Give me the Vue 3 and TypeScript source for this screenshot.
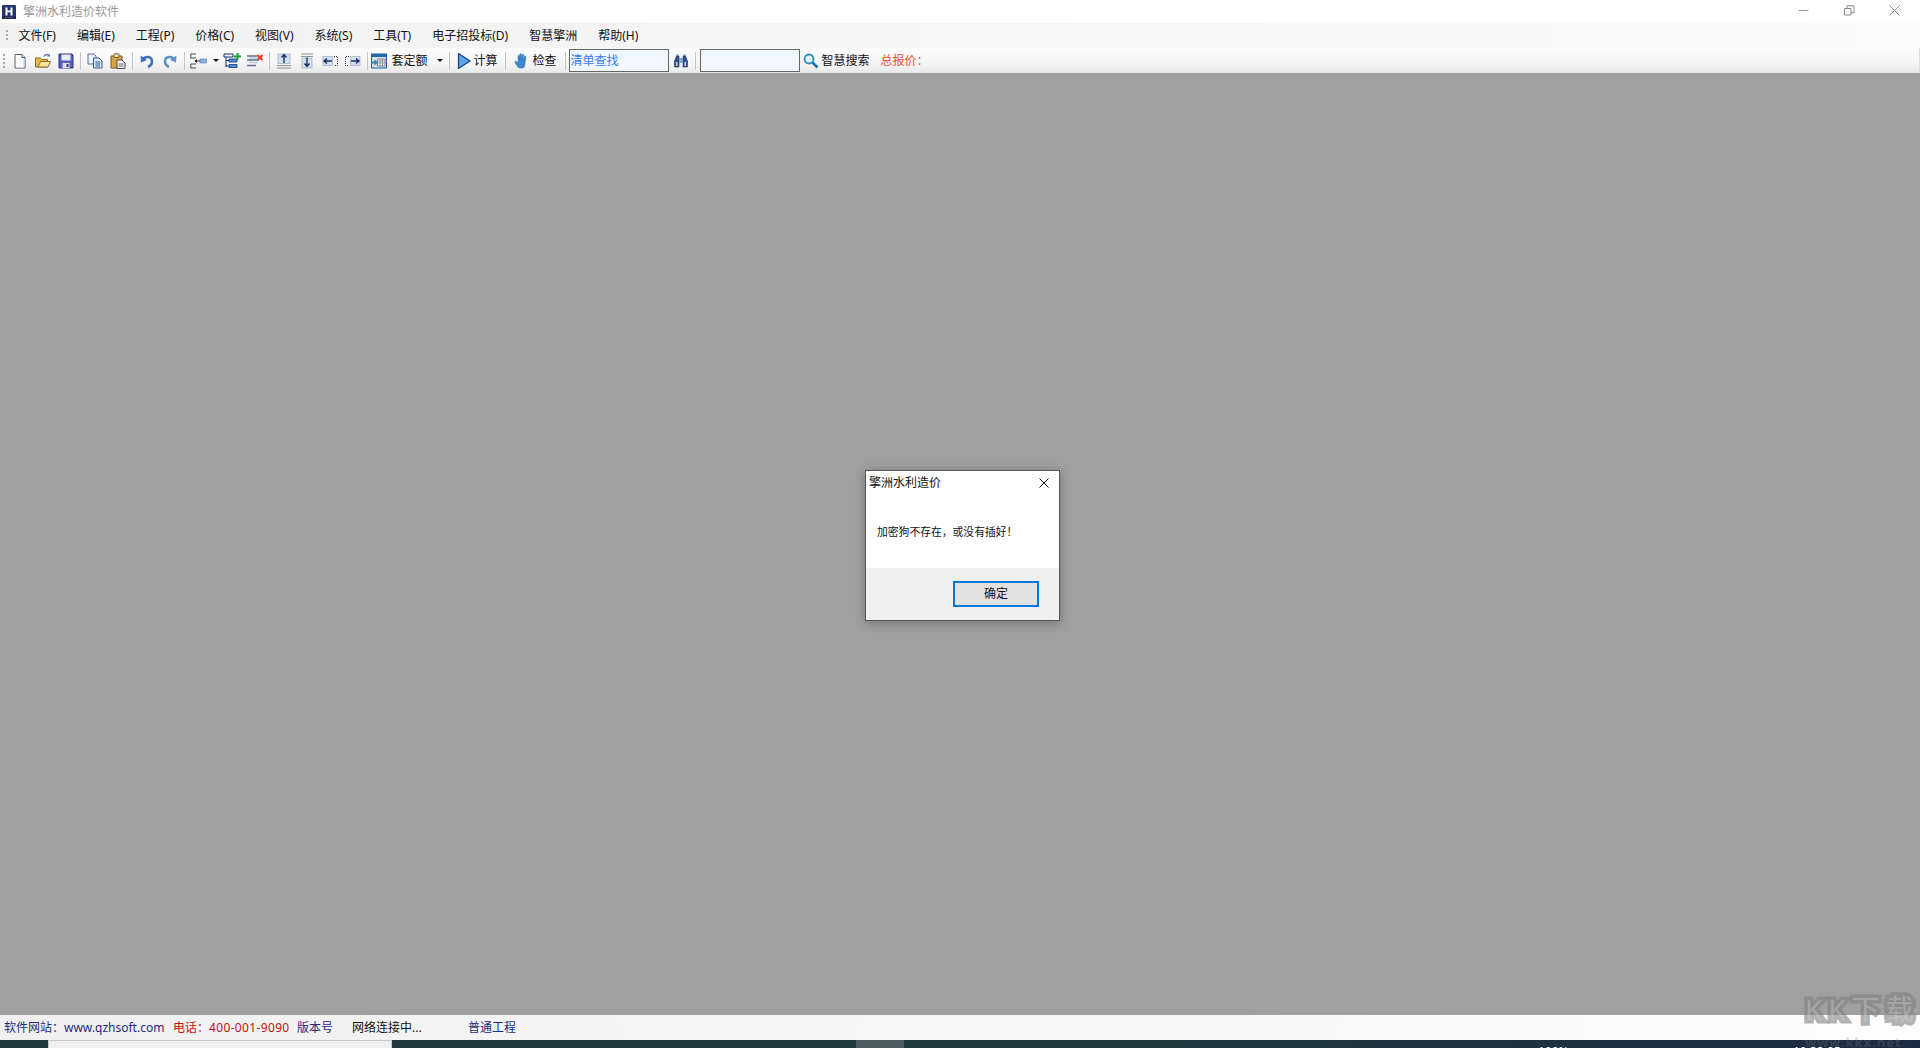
<script setup lang="ts">
const menus = ['文件(F)', '编辑(E)', '工程(P)', '价格(C)', '视图(V)', '系统(S)', '工具(T)', '电子招投标(D)', '智慧擎洲', '帮助(H)']
</script>

<template>
  <div class="app">
    <header class="titlebar">
      <svg class="logo" viewBox="0 0 14 14" width="14" height="14">
        <rect width="14" height="14" rx="1" fill="#27356f" />
        <rect y="11" width="14" height="3" fill="#1c2550" />
        <path d="M3.5 2.5h2v3h3v-3h2v8h-2V7.3h-3v3.2h-2z" fill="#fff" />
        <path d="M3 12.4h8" stroke="#aab" stroke-width=".7" stroke-dasharray="1 .6" />
      </svg>
      <span class="title">擎洲水利造价软件</span>
      <div class="winbtns">
        <svg width="11" height="11" viewBox="0 0 11 11"><path d="M0.5 5.5h10" stroke="#999" /></svg>
        <svg width="11" height="11" viewBox="0 0 11 11" fill="none" stroke="#888"><path d="M.5 3.5h6.5v6.5H.5z" /><path d="M3 3.5V.8h7v7H7" /></svg>
        <svg width="11" height="11" viewBox="0 0 11 11"><path d="M.5.5l10 10M10.5.5l-10 10" stroke="#888" /></svg>
      </div>
    </header>

    <nav class="menubar">
      <span class="grip"></span>
      <span v-for="m in menus" :key="m" class="menu">{{ m }}</span>
    </nav>

    <div class="toolbar">
      <span class="grip"></span>

      <button class="tb">
        <svg viewBox="0 0 16 16"><path d="M3 1.5h7l3 3v10.5H3z" fill="#fff" stroke="#50607c" /><path d="M10 1.5v3h3" fill="#d8e2f2" stroke="#50607c" /><path d="M12 6v8.500H4.500" fill="none" stroke="#c3d0e6" /></svg>
      </button>
      <button class="tb">
        <svg viewBox="0 0 16 16"><path d="M.5 5h5l1 1.500h6V14H.5z" fill="#e9b84c" stroke="#8a6a26" /><path d="M3 14l2.500-5.500H15.500L13 14z" fill="#fbe39a" stroke="#8a6a26" /><path d="M9 3.500c1-2 3-2.500 5-1" fill="none" stroke="#4c6fa8" stroke-width="1.200" /><path d="M14.800 .8v2.700h-2.700z" fill="#4c6fa8" /></svg>
      </button>
      <button class="tb">
        <svg viewBox="0 0 16 16"><path d="M1 1h13l1 1v13H1z" fill="#5a5cc0" stroke="#2f3380" /><rect x="3.500" y="1.500" width="9" height="6" fill="#e8ecf6" /><rect x="4.500" y="10" width="7" height="5" fill="#dfe1ea" /><rect x="8.500" y="11" width="2" height="3" fill="#33395e" /></svg>
      </button>
      <span class="sep"></span>

      <button class="tb">
        <svg viewBox="0 0 16 16"><path d="M1 1h6l2 2v8H1z" fill="#eef3fb" stroke="#5b7099" /><path d="M6.500 5H12l3 3v7H6.500z" fill="#d9e6f8" stroke="#33598f" /><path d="M8.500 9h4.500M8.500 11h4.500M8.500 13h4.500" stroke="#33598f" /></svg>
      </button>
      <button class="tb">
        <svg viewBox="0 0 16 16"><path d="M1 3h11v12H1z" fill="#d9a441" stroke="#7a5a1e" /><rect x="4" y=".8" width="5" height="3.700" rx=".8" fill="#f3e6be" stroke="#7a5a1e" /><path d="M7 7h5l3 3v5.500H7z" fill="#f4f4f4" stroke="#4a4a4a" /><path d="M8.500 11h5M8.500 13h5" stroke="#666" /></svg>
      </button>
      <span class="sep"></span>

      <button class="tb">
        <svg viewBox="0 0 16 16"><path d="M3.500 7c2-4 9-4.500 9.500 1 .3 3-2 5-4 6" fill="none" stroke="#3f73b8" stroke-width="2.600" /><path d="M1.500 2.500l.5 7 6-2.500z" fill="#3f73b8" /></svg>
      </button>
      <button class="tb">
        <svg viewBox="0 0 16 16"><path d="M12.500 7c-2-4-9-4.500-9.500 1-.3 3 2 5 4 6" fill="none" stroke="#5f8fcb" stroke-width="2.600" /><path d="M14.500 2.500l-.5 7-6-2.500z" fill="#5f8fcb" /></svg>
      </button>
      <span class="sep"></span>

      <button class="tb">
        <svg viewBox="0 0 18 16" class="wide"><path d="M6 1H.8v4H6M6 11H.8v4H6" fill="none" stroke="#333" stroke-width=".9" /><path d="M5 8h5" stroke="#333" /><path d="M4.500 8l2.500-2v4z" fill="#222" /><rect x="10" y="6" width="6.500" height="4" fill="#8eb4e3" stroke="#4c78b0" stroke-width=".6" /></svg>
      </button>
      <span class="arrow narrow"></span>
      <button class="tb">
        <svg viewBox="0 0 18 16" class="wide"><path d="M1 1h9v3H1zM3 4v10M3 7.500h3M3 13h3" fill="none" stroke="#12306e" /><path d="M6 6h8v3H6zM6 11.500h8v3H6z" fill="#4f8fdc" stroke="#12306e" stroke-width=".8" /><path d="M13.500 0h2v2.500H18v2h-2.500V7h-2V4.500H11v-2h2.500z" fill="#18a030" /></svg>
      </button>
      <button class="tb">
        <svg viewBox="0 0 18 16" class="wide"><path d="M1 3h10M1 7h12M1 12.500h9" stroke="#5b6f90" stroke-width="1.400" /><path d="M3 5h9M3 9.500h9" stroke="#b8cbe8" stroke-width="1.400" /><path d="M11.500 2l5 5M16.500 2l-5 5" stroke="#e83c24" stroke-width="2.200" /></svg>
      </button>
      <span class="sep"></span>

      <button class="tb">
        <svg viewBox="0 0 16 16"><rect x="2" y="1" width="12" height="9.500" fill="#d5e0ee" stroke="#8ea2bd" stroke-width=".6" /><path d="M8 1.500V10M5.500 4.500L8 1.500l2.500 3" fill="none" stroke="#14306a" stroke-width="1.400" /><path d="M1.500 12.500h13M1.500 15h13" stroke="#333" stroke-dasharray="1 1" /></svg>
      </button>
      <button class="tb">
        <svg viewBox="0 0 16 16"><path d="M2.500 1h11M2.500 3.500h11" stroke="#333" stroke-dasharray="1 1" /><rect x="3" y="5" width="10" height="10" fill="#d5e0ee" stroke="#8ea2bd" stroke-width=".6" /><path d="M8 4.500V13M5.500 10.500L8 13.500l2.500-3" fill="none" stroke="#14306a" stroke-width="1.400" /></svg>
      </button>
      <button class="tb">
        <svg viewBox="0 0 16 16"><rect x="1" y="3.500" width="9.500" height="9" fill="#d5e0ee" stroke="#8ea2bd" stroke-width=".6" /><path d="M2 8h8M5 5.500L2 8l3 2.500" fill="none" stroke="#14306a" stroke-width="1.400" /><path d="M12 3.500h3.500v9H12" fill="none" stroke="#333" stroke-dasharray="1 1" /></svg>
      </button>
      <button class="tb">
        <svg viewBox="0 0 16 16"><rect x="5.500" y="3.500" width="9.500" height="9" fill="#d5e0ee" stroke="#8ea2bd" stroke-width=".6" /><path d="M6 8h8M11 5.500L14 8l-3 2.500" fill="none" stroke="#14306a" stroke-width="1.400" /><path d="M4 3.500H.5v9H4" fill="none" stroke="#333" stroke-dasharray="1 1" /></svg>
      </button>
      <span class="sep"></span>

      <button class="tb labeled quota">
        <svg viewBox="0 0 16 16"><rect x=".5" y="1" width="15" height="14" fill="#cfe0f2" stroke="#1d5a9c" /><rect x=".5" y="1" width="15" height="3" fill="#2468b0" /><path d="M6.500 6h7.500v7H6.500z" fill="#fff" stroke="#444" stroke-width=".6" /><path d="M7 8h7M7 10h7M9 6v7M11.500 6v7" stroke="#444" stroke-width=".5" /><path d="M0 8.500h3.500V6.500L7 9.500l-3.500 3v-2H0z" fill="#2b80c8" /></svg>
        <span>套定额</span>
      </button>
      <span class="arrow quota-arrow"></span>
      <span class="sep"></span>

      <button class="tb labeled calc">
        <svg viewBox="0 0 16 16"><path d="M2.500 .5L14 8 2.500 15.500z" fill="#5ea3e6" stroke="#123f8f" stroke-width="1.200" /></svg>
        <span>计算</span>
      </button>
      <span class="sep"></span>

      <button class="tb labeled check">
        <svg viewBox="0 0 16 16"><path d="M5 15c-1.500-1.500-4-4.500-4.200-6 0-.8 1-1 1.600-.3L4 10V3c0-1 1.400-1 1.500 0l.3 4V1.500c0-1 1.500-1 1.600 0L7.700 7l.5-5c.1-1 1.500-.9 1.500 .1L9.500 7.500l1-4c.3-1 1.500-.7 1.400 .3L11 11c-.2 2-1 3.500-2 4z" fill="#3c87cf" stroke="#2a6cae" stroke-width=".5" /></svg>
        <span>检查</span>
      </button>
      <span class="sep"></span>

      <div class="field find">清单查找</div>
      <button class="tb binoc">
        <svg viewBox="0 0 16 16"><path d="M1.500 14V8l2-5h2.500v11zM14.500 14V8l-2-5H10v11z" fill="#2e4f8a" stroke="#1c2f5c" stroke-width=".6" /><path d="M6 5h4v5H6z" fill="#8aa2c8" /><path d="M3 9h1.500v4H3zM11.500 9H13v4h-1.500z" fill="#c5d5ee" /><path d="M3.500 1.500h2V3h-2zM10.500 1.500h2V3h-2z" fill="#5b7db0" /></svg>
      </button>
      <span class="sep"></span>

      <div class="field search"></div>
      <button class="tb labeled smart">
        <svg viewBox="0 0 16 16"><circle cx="6" cy="6" r="4.500" fill="#e6f3fa" stroke="#2a8ac4" stroke-width="1.800" /><path d="M9.500 9.500l5 5" stroke="#1f76ad" stroke-width="2.600" /></svg>
        <span>智慧搜索</span>
      </button>
      <span class="total">总报价：</span>
    </div>

    <main class="workspace">
      <section class="dialog">
        <div class="dlg-head">
          <span>擎洲水利造价</span>
          <svg width="10" height="10" viewBox="0 0 10 10"><path d="M.5.500l9 9M9.500.500l-9 9" stroke="#111" /></svg>
        </div>
        <div class="dlg-body">加密狗不存在，或没有插好！</div>
        <div class="dlg-foot"><button class="ok">确定</button></div>
      </section>
    </main>

    <footer class="status">
      <span class="s-site">软件网站：www.qzhsoft.com</span>
      <span class="s-tel">电话：<span class="digits">400-001-9090</span></span>
      <span class="s-ver">版本号</span>
      <span class="s-net">网络连接中...</span>
      <span class="s-type">普通工程</span>
    </footer>

    <div class="taskbar">
      <div class="task-white"></div>
      <div class="task-active"></div>
      <span class="task-zoom">100%</span>
      <span class="task-time">10:32:05</span>
    </div>

    <div class="wm-logo">KK下载</div>
    <div class="wm-url">www.kkx.net</div>
  </div>
</template>

<style scoped>
.app {
  position: relative;
  width: 1920px;
  height: 1048px;
  overflow: hidden;
  display: flex;
  flex-direction: column;
  font: 12px/1 "Noto Sans", "Noto Sans CJK SC", sans-serif;
  color: #111;
  background: #a0a0a0;
}
.titlebar {
  flex: 0 0 23px;
  display: flex;
  align-items: center;
  padding: 0 0 0 2px;
  background: #fff;
}
.title { margin-left: 7px; color: #999; }
.winbtns { margin-left: auto; display: flex; gap: 34.500px; padding-right: 20px; margin-top: -3px; }
.menubar {
  flex: 0 0 25px;
  display: flex;
  align-items: center;
  padding-left: 6px;
  gap: 21px;
  background: linear-gradient(90deg, #f1f1f1, #fbfbfb);
}
.menubar .grip { margin-right: -10.500px; height: 12px; }
.grip {
  width: 2px;
  height: 14px;
  background: repeating-linear-gradient(180deg, #a8a8a8 0 2px, transparent 2px 4px);
}
.toolbar {
  flex: 0 0 25px;
  display: flex;
  align-items: center;
  padding-left: 3px;
  background: linear-gradient(180deg, #fcfcfc 0, #f6f6f6 55%, #e9e9e9 100%);
  box-shadow: inset -2px 0 0 -1px #ddd;
}
.toolbar > .grip { margin-right: 3.500px; }
.tb {
  flex: none;
  width: 23px;
  height: 22px;
  padding: 0;
  border: 0;
  background: none;
  display: flex;
  align-items: center;
  justify-content: center;
  font: inherit;
  color: #111;
}
.tb svg { width: 16px; height: 16px; flex: none; }
.tb svg.wide { width: 18px; }
.sep { flex: none; width: 1px; height: 18px; background: #c4c4c4; margin: 0 2.500px; }
.arrow { flex: none; width: 0; height: 0; border: 3px solid transparent; border-top: 3px solid #111; border-bottom: 0; }
.narrow { margin: 0 1.500px 0 2.500px; }
.labeled { justify-content: flex-start; gap: 3px; }
.quota { width: 60px; margin-left: 0; padding-left: 0; gap: 5px; }
.quota-arrow { margin: 0 4px 0 6px; }
.calc { width: 50px; padding-left: 3px; gap: 2px; }
.check { width: 54px; padding-left: 5px; }
.field {
  flex: none;
  box-sizing: border-box;
  width: 100px;
  height: 23px;
  border: 1px solid #666;
  background: #f0f7ff;
  padding: 5px 1px;
}
.find { color: #3a7df0; }
.binoc { width: 24px; }
.search { margin-left: 1px; }
.smart { width: 74px; padding-left: 3px; }
.total { margin-left: 7px; color: #f2502a; }
.workspace {
  flex: 1;
  position: relative;
  background: #a0a0a0;
  display: flex;
  align-items: flex-start;
  justify-content: center;
}
.dialog {
  box-sizing: border-box;
  width: 195px;
  height: 151px;
  margin: 397px 0 0 5px;
  border: 1px solid #555;
  background: #fff;
  display: flex;
  flex-direction: column;
  box-shadow: 0 2px 10px rgba(0, 0, 0, .3);
}
.dlg-head {
  display: flex;
  justify-content: space-between;
  align-items: center;
  padding: 3px 10px 0 3px;
  height: 18px;
  font-size: 12px;
}
.dlg-body { flex: 1; padding: 35px 0 0 11px; font-size: 10.800px; }
.dlg-foot {
  flex: 0 0 52px;
  background: #f0f0f0;
  display: flex;
  justify-content: flex-end;
  padding: 13px 20px 0 0;
  box-sizing: border-box;
}
.ok {
  width: 86px;
  height: 26px;
  box-sizing: border-box;
  border: 2px solid #0078d7;
  background: #e1e1e1;
  font: inherit;
  color: #111;
  padding: 0;
}
.status {
  flex: 0 0 25px;
  display: flex;
  align-items: center;
  padding-left: 4px;
  background: linear-gradient(90deg, #f0f0f0, #fdfdfd);
  color: #1d2a80;
}
.s-site { width: 169px; }
.s-tel { width: 124px; color: #c8100c; }
.digits { letter-spacing: .35px; }
.s-ver { width: 55px; }
.s-net { width: 116px; color: #111; }
.taskbar {
  flex: 0 0 8px;
  position: relative;
  overflow: hidden;
  background: linear-gradient(90deg, #21383f 0, #21383f 60%, #1b2b42 100%);
  color: #fff;
}
.task-white { position: absolute; left: 48px; top: 0; width: 344px; height: 8px; box-sizing: border-box; background: #f0f0f0; border: 1px solid #c8c8c8; border-bottom: 0; }
.task-active { position: absolute; left: 856px; top: 0; width: 48px; height: 8px; background: #4d5d64; }
.task-zoom { position: absolute; left: 1538px; top: 6px; font-size: 12px; }
.task-time { position: absolute; left: 1793px; top: 6px; font-size: 12px; }
.wm-logo {
  position: absolute;
  left: 1805px;
  top: 992px;
  font: 400 28px/34px "Noto Sans", "Noto Sans CJK SC", sans-serif;
  letter-spacing: 6px;
  color: rgba(215, 215, 215, .35);
  -webkit-text-stroke: 7px rgba(128, 128, 128, .6);
  paint-order: stroke fill;
}
.wm-url {
  position: absolute;
  left: 1805px;
  top: 1035px;
  font: 700 13px/14px "Noto Sans", sans-serif;
  letter-spacing: 1px;
  color: rgba(120, 120, 120, .3);
}
</style>
